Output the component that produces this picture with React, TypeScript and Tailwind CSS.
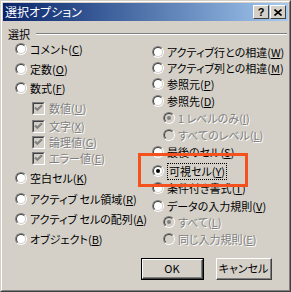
import type { ReactNode } from 'react';

type Row = {
  text: string;
  key: string;
  mt: string;
  kind: 'radio' | 'check' | 'sub';
  checked?: boolean;
  disabled?: boolean;
  focus?: boolean;
};

const leftRows: Row[] = [
  { text: 'コメント', key: 'C', mt: 'mt-0', kind: 'radio' },
  { text: '定数', key: 'O', mt: 'mt-[4px]', kind: 'radio' },
  { text: '数式', key: 'F', mt: 'mt-[3px]', kind: 'radio' },
  { text: '数値', key: 'U', mt: 'mt-[4px]', kind: 'check', disabled: true },
  { text: '文字', key: 'X', mt: 'mt-[2px]', kind: 'check', disabled: true },
  { text: '論理値', key: 'G', mt: 'mt-0', kind: 'check', disabled: true },
  { text: 'エラー値', key: 'E', mt: 'mt-0', kind: 'check', disabled: true },
  { text: '空白セル', key: 'K', mt: 'mt-[4px]', kind: 'radio' },
  { text: 'アクティブ セル領域', key: 'R', mt: 'mt-[5px]', kind: 'radio' },
  { text: 'アクティブ セルの配列', key: 'A', mt: 'mt-[4px]', kind: 'radio' },
  { text: 'オブジェクト', key: 'B', mt: 'mt-[4px]', kind: 'radio' },
];

const rightRows: Row[] = [
  { text: 'アクティブ行との相違', key: 'W', mt: 'mt-[3px]', kind: 'radio' },
  { text: 'アクティブ列との相違', key: 'M', mt: 'mt-0', kind: 'radio' },
  { text: '参照元', key: 'P', mt: 'mt-0', kind: 'radio' },
  { text: '参照先', key: 'D', mt: 'mt-[1px]', kind: 'radio' },
  { text: '1 レベルのみ', key: 'I', mt: 'mt-[1px]', kind: 'sub', checked: true, disabled: true },
  { text: 'すべてのレベル', key: 'L', mt: 'mt-[1px]', kind: 'sub', disabled: true },
  { text: '最後のセル', key: 'S', mt: 'mt-[1px]', kind: 'radio' },
  { text: '可視セル', key: 'Y', mt: 'mt-[3px]', kind: 'radio', checked: true, focus: true },
  { text: '条件付き書式', key: 'T', mt: 'mt-[1px]', kind: 'radio' },
  { text: 'データの入力規則', key: 'V', mt: 'mt-[2px]', kind: 'radio' },
  { text: 'すべて', key: 'L', mt: 'mt-0', kind: 'sub', checked: true, disabled: true },
  { text: '同じ入力規則', key: 'E', mt: 'mt-[1px]', kind: 'sub', disabled: true },
];

function Radio({ checked, disabled }: { checked?: boolean; disabled?: boolean }) {
  return (
    <span className="inline-flex h-3 w-3 shrink-0 rounded-full border border-t-[#808080] border-l-[#808080] border-b-white border-r-white">
      <span className={`flex h-full w-full items-center justify-center rounded-full border border-t-[#404040] border-l-[#404040] border-b-[#d4d0c8] border-r-[#d4d0c8] ${disabled ? 'bg-[#d4d0c8]' : 'bg-white'}`}>
        {checked && <span className={`h-1 w-1 rounded-full ${disabled ? 'bg-[#808080]' : 'bg-black'}`} />}
      </span>
    </span>
  );
}

function Check() {
  return (
    <span className="inline-flex h-[13px] w-[13px] shrink-0 border border-t-[#808080] border-l-[#808080] border-b-white border-r-white">
      <span className="flex h-full w-full border border-t-[#404040] border-l-[#404040] border-b-[#d4d0c8] border-r-[#d4d0c8] bg-[#d4d0c8]">
        <svg width="9" height="9" viewBox="0 0 9 9">
          <path d="M1 3.5 L3.3 5.8 L8 1.2" stroke="#808080" strokeWidth="2" fill="none" />
        </svg>
      </span>
    </span>
  );
}

function Label({ row }: { row: Row }) {
  const body: ReactNode = (
    <>
      {row.text}(<u className="underline-offset-1">{row.key}</u>)
    </>
  );
  return (
    <span
      className={`whitespace-nowrap leading-none ${row.disabled ? 'text-[#808080] [text-shadow:1px_1px_0_#fff]' : 'text-black'} ${row.focus ? 'border border-dotted border-black px-px py-[2px]' : ''}`}
    >
      {body}
    </span>
  );
}

function Option({ row }: { row: Row }) {
  if (row.kind === 'check') {
    return (
      <div className={`flex h-4 items-center gap-[4px] pl-[17px] ${row.mt}`}>
        <Check />
        <Label row={row} />
      </div>
    );
  }
  return (
    <div className={`flex h-4 items-center ${row.kind === 'sub' ? 'gap-[3px] pl-[11px]' : 'gap-[3px]'} ${row.mt}`}>
      <Radio checked={row.checked} disabled={row.disabled} />
      <Label row={row} />
    </div>
  );
}

function TitleButton({ children }: { children: ReactNode }) {
  return (
    <div className="flex h-[14px] w-4 items-center justify-center border border-t-white border-l-white border-b-[#404040] border-r-[#404040] bg-[#d4d0c8]">
      {children}
    </div>
  );
}

function Button({ label, isDefault, width }: { label: string; isDefault?: boolean; width: string }) {
  return (
    <div className={`${width} h-[22px] ${isDefault ? 'border border-black' : ''}`}>
      <div className="flex h-full w-full border border-t-white border-l-white border-b-[#404040] border-r-[#404040]">
        <div className="flex h-full w-full items-center justify-center border-b border-r border-b-[#808080] border-r-[#808080] text-black">
          {label}
        </div>
      </div>
    </div>
  );
}

export default function App() {
  return (
    <div className="relative h-[292px] w-[291px] overflow-hidden bg-[#d4d0c8] font-['Noto_Sans_CJK_JP',sans-serif] text-[11px] [font-feature-settings:'palt']">
      <div className="h-full w-full border border-t-[#d4d0c8] border-l-[#d4d0c8] border-b-[#404040] border-r-[#404040]">
        <div className="flex h-full w-full flex-col border border-t-white border-l-white border-b-[#808080] border-r-[#808080] p-px">
          <div className="flex h-[18px] items-start justify-between bg-gradient-to-r from-[#0a246a] to-[#a6caf0] pr-[2px]">
            <span className="pl-[2px] pt-[2px] text-[12px] leading-[14px] text-white">選択オプション</span>
            <div className="mt-[2px] flex gap-[1px]">
              <TitleButton>
                <span className="font-['Liberation_Sans',sans-serif] text-[11px] font-bold leading-none text-black">?</span>
              </TitleButton>
              <TitleButton>
                <svg width="8" height="7" viewBox="0 0 8 7">
                  <path d="M0.5 0.5 L7.5 6.5 M7.5 0.5 L0.5 6.5" stroke="#000" strokeWidth="1.6" />
                </svg>
              </TitleButton>
            </div>
          </div>

          <div className="mt-[6px] flex h-[14px] items-center pl-[5px] pr-px">
            <span className="leading-none text-black">選択</span>
            <div className="ml-[6px] h-[2px] flex-1 border-t border-b border-t-[#808080] border-b-white" />
          </div>

          <div className="flex">
            <div className="flex w-[137px] flex-col pl-[12px]">
              {leftRows.map((row) => (
                <Option key={row.text} row={row} />
              ))}
            </div>
            <div className="flex flex-col pl-[12px]">
              {rightRows.map((row) => (
                <Option key={row.text} row={row} />
              ))}
            </div>
          </div>

          <div className="mt-[11px] flex justify-end gap-[12px] pr-[16px]">
            <Button label="OK" isDefault width="w-[63px]" />
            <Button label="キャンセル" width="w-[56px]" />
          </div>
        </div>
      </div>

      <div className="absolute left-[138px] top-[153px] h-[34px] w-[110px] border-[3px] border-[#f4511e]" />
    </div>
  );
}
